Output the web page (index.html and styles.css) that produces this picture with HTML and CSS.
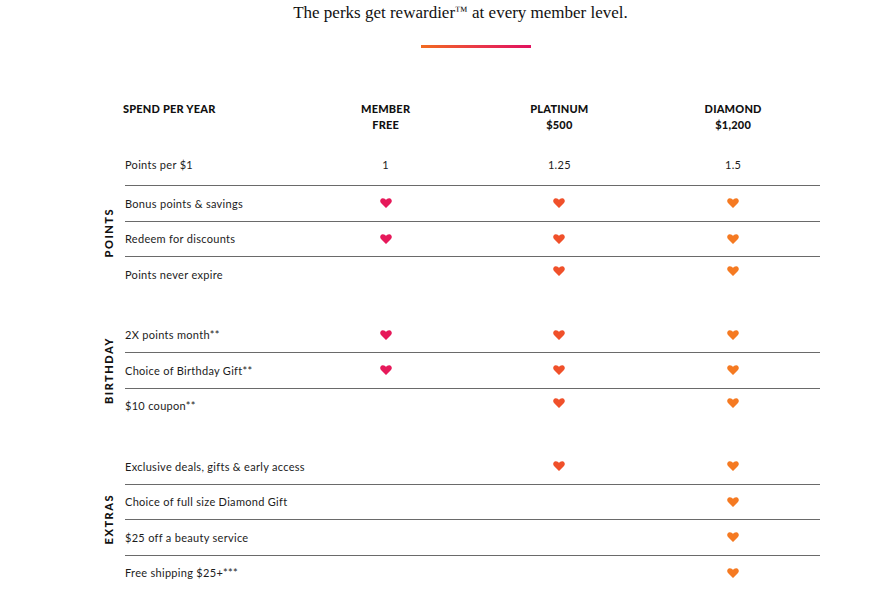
FILE: index.html
```html
<!DOCTYPE html>
<html lang="en">
<head>
<meta charset="utf-8">
<title>Beauty Insider perks</title>
<link rel="stylesheet" href="styles.css">
</head>
<body>
<div class="page">
  <p class="title">The perks get rewardier<span class="tm">™</span> at every member level.</p>
  <div class="bar"></div>

  <div class="chart">
    <div class="tiers grid">
      <div class="h-label">SPEND PER YEAR</div>
      <div class="h-col">MEMBER<br>FREE</div>
      <div class="h-col">PLATINUM<br>$500</div>
      <div class="h-col">DIAMOND<br>$1,200</div>
    </div>

    <div class="rate grid">
      <div class="label">Points per $1</div>
      <div class="cell">1</div>
      <div class="cell">1.25</div>
      <div class="cell">1.5</div>
    </div>

    <section class="group g-points">
      <div class="side"><span>POINTS</span></div>
      <div class="rows">
        <div class="row grid lined">
          <div class="label">Bonus points &amp; savings</div>
          <div class="cell"><svg class="heart h-member" viewBox="0 0 12 10"><path d="M6 10L1 5C-.4 3.6 0 .5 2.7.2 4.1.1 5.3.8 6 2 6.7.8 7.9.1 9.3.2 12 .5 12.4 3.6 11 5z"/></svg></div>
          <div class="cell"><svg class="heart h-plat" viewBox="0 0 12 10"><path d="M6 10L1 5C-.4 3.6 0 .5 2.7.2 4.1.1 5.3.8 6 2 6.7.8 7.9.1 9.3.2 12 .5 12.4 3.6 11 5z"/></svg></div>
          <div class="cell"><svg class="heart h-diam" viewBox="0 0 12 10"><path d="M6 10L1 5C-.4 3.6 0 .5 2.7.2 4.1.1 5.3.8 6 2 6.7.8 7.9.1 9.3.2 12 .5 12.4 3.6 11 5z"/></svg></div>
        </div>
        <div class="row grid lined">
          <div class="label">Redeem for discounts</div>
          <div class="cell"><svg class="heart h-member" viewBox="0 0 12 10"><path d="M6 10L1 5C-.4 3.6 0 .5 2.7.2 4.1.1 5.3.8 6 2 6.7.8 7.9.1 9.3.2 12 .5 12.4 3.6 11 5z"/></svg></div>
          <div class="cell"><svg class="heart h-plat" viewBox="0 0 12 10"><path d="M6 10L1 5C-.4 3.6 0 .5 2.7.2 4.1.1 5.3.8 6 2 6.7.8 7.9.1 9.3.2 12 .5 12.4 3.6 11 5z"/></svg></div>
          <div class="cell"><svg class="heart h-diam" viewBox="0 0 12 10"><path d="M6 10L1 5C-.4 3.6 0 .5 2.7.2 4.1.1 5.3.8 6 2 6.7.8 7.9.1 9.3.2 12 .5 12.4 3.6 11 5z"/></svg></div>
        </div>
        <div class="row grid lined">
          <div class="label">Points never expire</div>
          <div class="cell"></div>
          <div class="cell"><svg class="heart h-plat up" viewBox="0 0 12 10"><path d="M6 10L1 5C-.4 3.6 0 .5 2.7.2 4.1.1 5.3.8 6 2 6.7.8 7.9.1 9.3.2 12 .5 12.4 3.6 11 5z"/></svg></div>
          <div class="cell"><svg class="heart h-diam up" viewBox="0 0 12 10"><path d="M6 10L1 5C-.4 3.6 0 .5 2.7.2 4.1.1 5.3.8 6 2 6.7.8 7.9.1 9.3.2 12 .5 12.4 3.6 11 5z"/></svg></div>
        </div>
      </div>
    </section>

    <section class="group">
      <div class="side"><span>BIRTHDAY</span></div>
      <div class="rows">
        <div class="row grid">
          <div class="label">2X points month**</div>
          <div class="cell"><svg class="heart h-member" viewBox="0 0 12 10"><path d="M6 10L1 5C-.4 3.6 0 .5 2.7.2 4.1.1 5.3.8 6 2 6.7.8 7.9.1 9.3.2 12 .5 12.4 3.6 11 5z"/></svg></div>
          <div class="cell"><svg class="heart h-plat" viewBox="0 0 12 10"><path d="M6 10L1 5C-.4 3.6 0 .5 2.7.2 4.1.1 5.3.8 6 2 6.7.8 7.9.1 9.3.2 12 .5 12.4 3.6 11 5z"/></svg></div>
          <div class="cell"><svg class="heart h-diam" viewBox="0 0 12 10"><path d="M6 10L1 5C-.4 3.6 0 .5 2.7.2 4.1.1 5.3.8 6 2 6.7.8 7.9.1 9.3.2 12 .5 12.4 3.6 11 5z"/></svg></div>
        </div>
        <div class="row grid lined">
          <div class="label">Choice of Birthday Gift**</div>
          <div class="cell"><svg class="heart h-member" viewBox="0 0 12 10"><path d="M6 10L1 5C-.4 3.6 0 .5 2.7.2 4.1.1 5.3.8 6 2 6.7.8 7.9.1 9.3.2 12 .5 12.4 3.6 11 5z"/></svg></div>
          <div class="cell"><svg class="heart h-plat" viewBox="0 0 12 10"><path d="M6 10L1 5C-.4 3.6 0 .5 2.7.2 4.1.1 5.3.8 6 2 6.7.8 7.9.1 9.3.2 12 .5 12.4 3.6 11 5z"/></svg></div>
          <div class="cell"><svg class="heart h-diam" viewBox="0 0 12 10"><path d="M6 10L1 5C-.4 3.6 0 .5 2.7.2 4.1.1 5.3.8 6 2 6.7.8 7.9.1 9.3.2 12 .5 12.4 3.6 11 5z"/></svg></div>
        </div>
        <div class="row grid lined">
          <div class="label">$10 coupon**</div>
          <div class="cell"></div>
          <div class="cell"><svg class="heart h-plat up" viewBox="0 0 12 10"><path d="M6 10L1 5C-.4 3.6 0 .5 2.7.2 4.1.1 5.3.8 6 2 6.7.8 7.9.1 9.3.2 12 .5 12.4 3.6 11 5z"/></svg></div>
          <div class="cell"><svg class="heart h-diam up" viewBox="0 0 12 10"><path d="M6 10L1 5C-.4 3.6 0 .5 2.7.2 4.1.1 5.3.8 6 2 6.7.8 7.9.1 9.3.2 12 .5 12.4 3.6 11 5z"/></svg></div>
        </div>
      </div>
    </section>

    <section class="group">
      <div class="side"><span>EXTRAS</span></div>
      <div class="rows">
        <div class="row grid">
          <div class="label">Exclusive deals, gifts &amp; early access</div>
          <div class="cell"></div>
          <div class="cell"><svg class="heart h-plat" viewBox="0 0 12 10"><path d="M6 10L1 5C-.4 3.6 0 .5 2.7.2 4.1.1 5.3.8 6 2 6.7.8 7.9.1 9.3.2 12 .5 12.4 3.6 11 5z"/></svg></div>
          <div class="cell"><svg class="heart h-diam" viewBox="0 0 12 10"><path d="M6 10L1 5C-.4 3.6 0 .5 2.7.2 4.1.1 5.3.8 6 2 6.7.8 7.9.1 9.3.2 12 .5 12.4 3.6 11 5z"/></svg></div>
        </div>
        <div class="row grid lined">
          <div class="label">Choice of full size Diamond Gift</div>
          <div class="cell"></div>
          <div class="cell"></div>
          <div class="cell"><svg class="heart h-diam" viewBox="0 0 12 10"><path d="M6 10L1 5C-.4 3.6 0 .5 2.7.2 4.1.1 5.3.8 6 2 6.7.8 7.9.1 9.3.2 12 .5 12.4 3.6 11 5z"/></svg></div>
        </div>
        <div class="row grid lined">
          <div class="label">$25 off a beauty service</div>
          <div class="cell"></div>
          <div class="cell"></div>
          <div class="cell"><svg class="heart h-diam" viewBox="0 0 12 10"><path d="M6 10L1 5C-.4 3.6 0 .5 2.7.2 4.1.1 5.3.8 6 2 6.7.8 7.9.1 9.3.2 12 .5 12.4 3.6 11 5z"/></svg></div>
        </div>
        <div class="row grid lined">
          <div class="label">Free shipping $25+***</div>
          <div class="cell"></div>
          <div class="cell"></div>
          <div class="cell"><svg class="heart h-diam" viewBox="0 0 12 10"><path d="M6 10L1 5C-.4 3.6 0 .5 2.7.2 4.1.1 5.3.8 6 2 6.7.8 7.9.1 9.3.2 12 .5 12.4 3.6 11 5z"/></svg></div>
        </div>
      </div>
    </section>
  </div>
</div>
</body>
</html>
```

FILE: styles.css
```css
html, body {
  margin: 0;
  padding: 0;
  background: #ffffff;
}

.page {
  width: 887px;
  font-family: "Lato", "Open Sans", sans-serif;
  color: #222;
}

.title {
  margin: 0;
  height: 22px;
  padding: 2px 0 0 34px;
  font-family: "Liberation Serif", "Times New Roman", serif;
  font-size: 17px;
  line-height: 22px;
  text-align: center;
  color: #111;
}

.tm {
  font-size: 13px;
  line-height: 0;
  vertical-align: 3px;
}

.bar {
  width: 110px;
  height: 3px;
  margin: 21px 0 0 421px;
  background: linear-gradient(90deg, #f26b1f 0%, #e9354a 55%, #e1125f 100%);
}

.chart {
  margin: 53px 0 0 95px;
  width: 725px;
}

.grid {
  display: grid;
  grid-template-columns: repeat(4, minmax(0, 1fr));
  align-items: center;
}

.tiers,
.rate {
  margin-left: 30px;
}

.tiers {
  font-size: 11px;
  font-weight: 900;
  line-height: 16px;
  letter-spacing: 0.2px;
  color: #111;
  align-items: start;
}

.h-label {
  margin-left: -2px;
}

.h-col {
  text-align: center;
}

.rate {
  margin-top: 13px;
  height: 36px;
  padding-bottom: 3px;
}

.label {
  font-size: 11px;
  letter-spacing: 0.3px;
  color: #1c1c1c;
  white-space: nowrap;
}

.cell {
  font-size: 11px;
  letter-spacing: 0.3px;
  text-align: center;
  color: #1c1c1c;
  display: flex;
  justify-content: center;
  align-items: center;
}

.group {
  display: flex;
  margin-top: 26px;
}

.g-points {
  margin-top: 0;
}

.side {
  width: 30px;
  display: flex;
  align-items: center;
  justify-content: flex-start;
}

.side span {
  width: 28px;
  writing-mode: vertical-rl;
  transform: rotate(180deg);
  font-size: 11px;
  font-weight: 900;
  letter-spacing: 1.5px;
  color: #111;
  text-align: center;
  line-height: 28px;
}

.g-points .side {
  padding-bottom: 12px;
}

.rows {
  width: 695px;
}

.row {
  height: 34.5px;
}

.lined {
  border-top: 1px solid #6a6a6a;
}

.heart {
  width: 12px;
  height: 10px;
  display: block;
}

.heart.up {
  transform: translateY(-3px);
}

.h-member { fill: #e6195a; }
.h-plat { fill: #f0502a; }
.h-diam { fill: #f57a22; }
```
